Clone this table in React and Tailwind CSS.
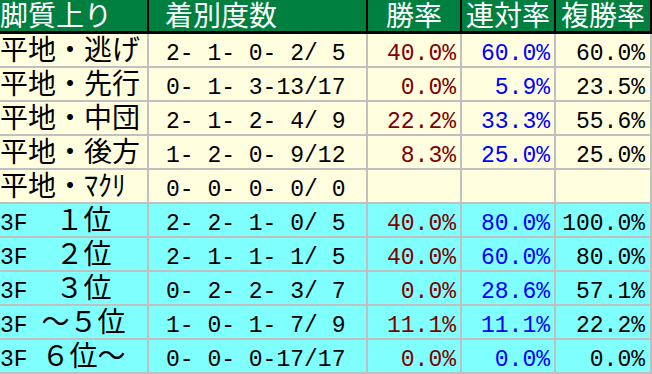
import React from 'react';

// 脚質・上り別の成績表
const rows = [
  { label: '平地・逃げ', record: '2- 1- 0- 2/ 5', win: '40.0%', quinella: '60.0%', show: '60.0%', tone: 'yellow' },
  { label: '平地・先行', record: '0- 1- 3-13/17', win: '0.0%', quinella: '5.9%', show: '23.5%', tone: 'yellow' },
  { label: '平地・中団', record: '2- 1- 2- 4/ 9', win: '22.2%', quinella: '33.3%', show: '55.6%', tone: 'yellow' },
  { label: '平地・後方', record: '1- 2- 0- 9/12', win: '8.3%', quinella: '25.0%', show: '25.0%', tone: 'yellow' },
  { label: '平地・ﾏｸﾘ', record: '0- 0- 0- 0/ 0', win: '', quinella: '', show: '', tone: 'yellow' },
  { label: '3F　１位', record: '2- 2- 1- 0/ 5', win: '40.0%', quinella: '80.0%', show: '100.0%', tone: 'cyan' },
  { label: '3F　２位', record: '2- 1- 1- 1/ 5', win: '40.0%', quinella: '60.0%', show: '80.0%', tone: 'cyan' },
  { label: '3F　３位', record: '0- 2- 2- 3/ 7', win: '0.0%', quinella: '28.6%', show: '57.1%', tone: 'cyan' },
  { label: '3F ～５位', record: '1- 0- 1- 7/ 9', win: '11.1%', quinella: '11.1%', show: '22.2%', tone: 'cyan' },
  { label: '3F ６位～', record: '0- 0- 0-17/17', win: '0.0%', quinella: '0.0%', show: '0.0%', tone: 'cyan' },
];

const ascii = /^[\x20-\x7e]+$/;

// half-width text in a mono face, everything else in the CJK face.
// the cell's own CJK font + 28px leading acts as the strut, so the baseline
// sits at the same height in every cell.
const Mixed = ({ text }) =>
  text
    .split(/([\x20-\x7e]+)/)
    .filter(Boolean)
    .map((part, i) =>
      ascii.test(part) ? (
        <span key={i} className="font-['Liberation_Mono',monospace] text-[23px] leading-[14px]">
          {part}
        </span>
      ) : (
        <span key={i} className="leading-[24px]">
          {part}
        </span>
      )
    );

const cellBase =
  "h-full shrink-0 border-r-2 whitespace-pre overflow-hidden font-['Noto_Sans_CJK_JP',sans-serif] text-[28px] leading-[28px]";

const HeadCell = ({ width, align, children }) => (
  <div className={`${cellBase} ${width} ${align} border-black text-white`}>
    <Mixed text={children} />
  </div>
);

const Cell = ({ width, align, color = 'text-black', children }) => (
  <div className={`${cellBase} ${width} ${align} ${color} border-[#c0c0c0]`}>
    <Mixed text={children} />
  </div>
);

export default function App() {
  return (
    <div className="w-[652px] h-[374px] bg-white">
      <div className="flex h-[34px] bg-[#008040] border-b-[3px] border-black">
        <HeadCell width="w-[149px]" align="pl-0">脚質上り</HeadCell>
        <HeadCell width="w-[219px]" align="pl-[16px]">着別度数</HeadCell>
        <HeadCell width="w-[94px]" align="text-center">勝率</HeadCell>
        <HeadCell width="w-[94px]" align="text-center">連対率</HeadCell>
        <HeadCell width="w-[96px]" align="text-center">複勝率</HeadCell>
      </div>
      {rows.map((r) => (
        <div
          key={r.label}
          className={`flex h-[34px] border-b-2 border-[#c0c0c0] ${
            r.tone === 'cyan' ? 'bg-[#80ffff]' : 'bg-[#ffffe0]'
          }`}
        >
          <Cell width="w-[149px]" align="pl-0">{r.label}</Cell>
          <Cell width="w-[219px]" align="pl-[17px]">{r.record}</Cell>
          <Cell width="w-[94px]" align="text-right pr-[4px]" color="text-[#800000]">{r.win}</Cell>
          <Cell width="w-[94px]" align="text-right pr-[4px]" color="text-[#0000ff]">{r.quinella}</Cell>
          <Cell width="w-[96px]" align="text-right pr-[5px]">{r.show}</Cell>
        </div>
      ))}
    </div>
  );
}
